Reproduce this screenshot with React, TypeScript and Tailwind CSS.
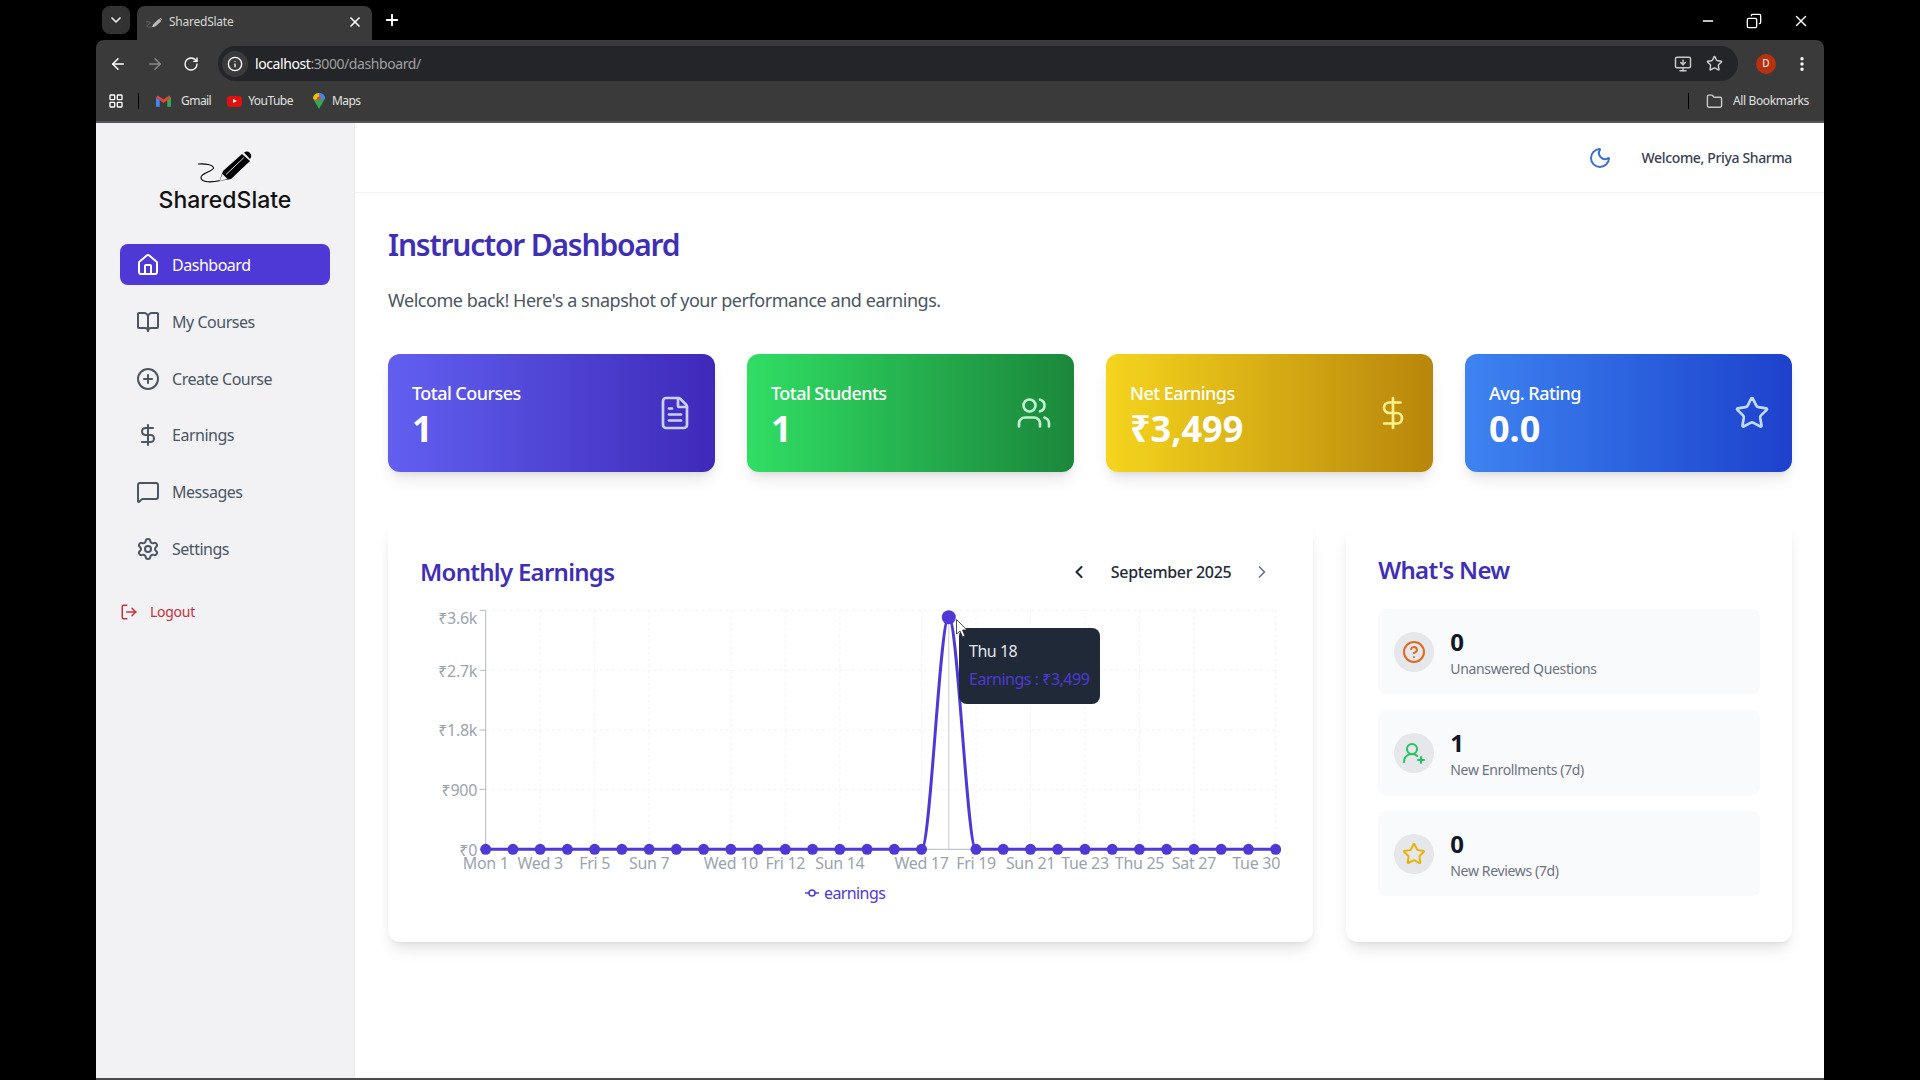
import React from 'react';
import {
  ArrowLeft, ArrowRight, BookOpen, ChevronDown, ChevronLeft, ChevronRight, CircleHelp, CirclePlus, Copy,
  DollarSign, EllipsisVertical, FileText, Folder, House, Info, LayoutGrid, LogOut, MessageSquare, Minus,
  MonitorDown, Moon, Plus, RotateCw, Settings, Star, UserRoundPlus, Users, X,
} from 'lucide-react';

const font = { fontFamily: '"Noto Sans", sans-serif' };

const PenLogo: React.FC<{ className?: string }> = ({ className }) => (
  <svg viewBox="0 0 54 36" className={className} fill="none">
    <path d="M0.500 14 C7 13.500 15 14.500 15.500 18 C15 21.500 3 23 3 27.500 C3 33 14 32.500 22.500 30.500" stroke="currentColor" strokeWidth="1.1" strokeLinecap="round" />
    <path d="M21.500 31 L25 21 L44 4 L52 11 L33 29 Z" fill="currentColor" />
    <path d="M46 2.500 C48 1 50 1 51.500 2.500 L53 4.500 C53.500 6 53 7.500 52 9 Z" fill="currentColor" />
    <path d="M21.500 31 L24.500 24 L29.500 29 Z" fill="#f2f2f5" />
    <path d="M28 24.500 L46 7.500" stroke="#f2f2f5" strokeWidth="0.9" />
  </svg>
);

const Browser: React.FC = () => (
  <div className="text-[#e8eaed] bg-black" style={font}>
    <div className="h-10 flex items-start px-[6px]">
      <div className="w-7 h-7 mt-[6px] rounded-lg bg-[#333333] flex items-center justify-center">
        <ChevronDown className="w-4 h-4" strokeWidth={2.5} />
      </div>
      <div className="w-[235px] h-[34px] mt-[6px] ml-[7px] rounded-t-lg bg-[#3a3a3a] flex items-center pl-[9px] pr-[9px]">
        <PenLogo className="w-4 h-4 text-[#b5b5b5]" />
        <span className="ml-[7px] -mt-[2px] text-xs tracking-[-0.02em] text-[#d6d6d6]">SharedSlate</span>
        <X className="w-4 h-4 ml-auto -mt-[2px] text-white" strokeWidth={2.5} />
      </div>
      <Plus className="w-[18px] h-[18px] mt-[11px] ml-[11px] text-white" strokeWidth={2.5} />
      <div className="ml-auto flex items-center mt-[12px] mr-[8px] gap-[30px] text-white">
        <Minus className="w-4 h-4" />
        <Copy className="w-4 h-4 -scale-x-100" />
        <X className="w-[18px] h-[18px]" />
      </div>
    </div>
    <div className="w-full rounded-t-lg bg-[#3a3a3a] border-b-2 border-[#555555] h-[83px]">
      <div className="h-[41px] flex items-center pt-1.5">
        <ArrowLeft className="w-[18px] h-[18px] ml-[13px] text-white" />
        <ArrowRight className="w-[18px] h-[18px] ml-[19px] text-[#8a8a8a]" />
        <RotateCw className="w-4 h-4 ml-[19px] text-white" />
        <div className="ml-[19px] w-[1520px] h-[35px] rounded-full bg-[#232528] flex items-center pl-1">
          <div className="w-[26px] h-[26px] rounded-full bg-[#3a3a3a] flex items-center justify-center">
            <Info className="w-4 h-4 text-white" />
          </div>
          <span className="ml-[7px] text-sm tracking-[-0.03em]">
            <span className="text-white">localhost</span>
            <span className="text-[#a0a0a0]">:3000/dashboard/</span>
          </span>
          <MonitorDown className="w-[18px] h-[18px] ml-auto mr-[14px] text-[#c8c8c8]" />
          <Star className="w-[17px] h-[17px] mr-[15px] text-[#d0d0d0]" />
        </div>
        <div className="ml-[18px] w-5 h-5 rounded-full bg-[#b8300f] flex items-center justify-center text-[10px] text-white">D</div>
        <EllipsisVertical className="w-[18px] h-[18px] ml-[17px] text-white" strokeWidth={2.5} />
      </div>
      <div className="h-[40px] flex items-center text-xs text-[#e0e0e0] tracking-[-0.045em]">
        <LayoutGrid className="w-4 h-4 ml-3 text-white" />
        <div className="ml-[14px] w-px h-4 bg-black" />
        <svg viewBox="0 0 16 12" className="w-[15px] h-[12px] ml-[17px]">
          <path d="M0 2 V12 H4 V5 Z" fill="#4285f4" />
          <path d="M12 5 V12 H16 V2 Z" fill="#34a853" />
          <path d="M0 2 L8 8 L16 2 L14 0 L8 4.500 L2 0 Z" fill="#ea4335" />
        </svg>
        <span className="ml-[10px]">Gmail</span>
        <div className="ml-[16px] w-[15px] h-[11px] rounded-[3px] bg-[#e01010] flex items-center justify-center">
          <div className="w-0 h-0 border-y-[2.5px] border-y-transparent border-l-[4px] border-l-white" />
        </div>
        <span className="ml-[6px]">YouTube</span>
        <svg viewBox="0 0 12 16" className="w-[12px] h-[16px] ml-[20px]">
          <path d="M6 0 C2.500 0 0 2.500 0 5.500 L6 16 L12 5.500 C12 2.500 9.500 0 6 0 Z" fill="#34a853" />
          <path d="M1 2.500 C2 1 4 0 6 0 L6 4 L2.500 7 L0 5.500 C0 4.500 0.400 3.500 1 2.500 Z" fill="#fbbc04" />
          <path d="M6 0 C9.500 0 12 2.500 12 5.500 L9 7 L6 4 Z" fill="#4285f4" />
          <circle cx="6" cy="5.500" r="2" fill="#ea4335" />
        </svg>
        <span className="ml-[7px]">Maps</span>
        <div className="ml-auto w-px h-4 bg-black" />
        <Folder className="w-[17px] h-[17px] ml-[17px] text-[#c8c8c8]" />
        <span className="ml-[10px] mr-[15px] tracking-[-0.03em]">All Bookmarks</span>
      </div>
    </div>
  </div>
);

const navItems = [
  { label: 'My Courses', Icon: BookOpen },
  { label: 'Create Course', Icon: CirclePlus },
  { label: 'Earnings', Icon: DollarSign },
  { label: 'Messages', Icon: MessageSquare },
  { label: 'Settings', Icon: Settings },
];

const Sidebar: React.FC = () => (
  <aside className="w-[259px] shrink-0 bg-[#f2f2f5] border-r border-[#e9e9ec] pl-6 pr-[24px] flex flex-col">
    <div className="flex flex-col items-center pt-[27px]">
      <PenLogo className="w-[54px] h-[36px] text-black" />
      <div className="text-[23px] leading-8 -mt-[2px] font-medium text-[#111111]" style={{ fontFamily: 'Inter, sans-serif' }}>SharedSlate</div>
    </div>
    <nav className="mt-[28px] flex flex-col gap-[15.6px] tracking-[-0.03em]">
      <div className="h-[41px] mb-[1.2px] rounded-lg bg-[#4f39d6] text-white flex items-center gap-3 px-4">
        <House className="w-6 h-6" />
        <span>Dashboard</span>
      </div>
      {navItems.map(({ label, Icon }) => (
        <div key={label} className="h-[41px] text-[#4b5563] flex items-center gap-3 px-4">
          <Icon className="w-6 h-6" />
          <span>{label}</span>
        </div>
      ))}
    </nav>
    <div className="mt-[33px] flex items-center text-sm text-[#c9303f] tracking-[-0.02em]">
      <LogOut className="w-[18px] h-[18px] scale-x-[-1] rotate-180" />
      <span className="ml-3">Logout</span>
    </div>
  </aside>
);

const statCards = [
  { label: 'Total Courses', value: '1', Icon: FileText, bg: 'from-[#625ff0] to-[#3f28ba]', iconColor: 'text-[#c7d2fe]' },
  { label: 'Total Students', value: '1', Icon: Users, bg: 'from-[#30de64] to-[#1b873b]', iconColor: 'text-[#bbf7d0]' },
  { label: 'Net Earnings', value: '₹3,499', Icon: DollarSign, bg: 'from-[#f5d51e] to-[#b8860b]', iconColor: 'text-[#fef08a]' },
  { label: 'Avg. Rating', value: '0.0', Icon: Star, bg: 'from-[#3f83f1] to-[#1f40cc]', iconColor: 'text-[#bfdbfe]' },
];

const X0 = 65.7;
const STEP = 27.24;
const TOP = 10.3;
const BASE = 249.3;
const PEAK = 17;
const PEAK_Y = 17.2;
const px = (i: number) => X0 + i * STEP;

const yTicks = [
  { label: '₹3.6k', y: TOP, textY: 18 },
  { label: '₹2.7k', y: 70.3, textY: 71 },
  { label: '₹1.8k', y: 130, textY: 130 },
  { label: '₹900', y: 189.3, textY: 190 },
  { label: '₹0', y: BASE, textY: 249.5 },
];

const xTicks: [number, string][] = [
  [0, 'Mon 1'], [2, 'Wed 3'], [4, 'Fri 5'], [6, 'Sun 7'], [9, 'Wed 10'], [11, 'Fri 12'], [13, 'Sun 14'],
  [16, 'Wed 17'], [18, 'Fri 19'], [20, 'Sun 21'], [22, 'Tue 23'], [24, 'Thu 25'], [26, 'Sat 27'],
];

const linePath = [
  `M${px(0)} ${BASE}`,
  `L${px(PEAK - 1)} ${BASE}`,
  `C${px(PEAK - 1) + 9.08} ${BASE} ${px(PEAK) - 9.08} ${PEAK_Y} ${px(PEAK)} ${PEAK_Y}`,
  `C${px(PEAK) + 9.08} ${PEAK_Y} ${px(PEAK + 1) - 9.08} ${BASE} ${px(PEAK + 1)} ${BASE}`,
  `L${px(29)} ${BASE}`,
].join(' ');

const EarningsChart: React.FC = () => (
  <div className="relative mt-[10px] h-[310px]">
    <svg width="861" height="310" className="block" fontSize="16" style={font}>
      <g stroke="#f1f2f4" strokeDasharray="3 3">
        {yTicks.slice(0, 4).map((t) => <line key={t.label} x1={X0} x2={px(29)} y1={t.y} y2={t.y} />)}
        {xTicks.slice(1).map(([i]) => <line key={i} x1={px(i)} x2={px(i)} y1={TOP} y2={BASE} />)}
        <line x1={px(29)} x2={px(29)} y1={TOP} y2={BASE} />
      </g>
      <g stroke="#b4b7c2">
        <line x1={X0} x2={X0} y1={TOP} y2={BASE} />
        <line x1={X0} x2={px(29)} y1={BASE} y2={BASE} />
        {yTicks.map((t) => <line key={t.label} x1={X0 - 6} x2={X0} y1={t.y} y2={t.y} />)}
      </g>
      <g fill="#9ca3af" letterSpacing="-0.3">
        {yTicks.map((t) => <text key={t.label} x={57} y={t.textY} textAnchor="end" dominantBaseline="central">{t.label}</text>)}
        {xTicks.map(([i, label]) => <text key={i} x={px(i)} y={263} textAnchor="middle" dominantBaseline="central">{label}</text>)}
        <text x={860} y={263} textAnchor="end" dominantBaseline="central">Tue 30</text>
      </g>
      <line x1={px(PEAK)} x2={px(PEAK)} y1={TOP} y2={BASE} stroke="#cccccc" />
      <path d={linePath} fill="none" stroke="#4f39d6" strokeWidth="3" />
      {Array.from({ length: 30 }, (_, i) => i).filter((i) => i !== PEAK).map((i) => (
        <circle key={i} cx={px(i)} cy={BASE} r="5.5" fill="#4f39d6" />
      ))}
      <circle cx={px(PEAK)} cy={PEAK_Y} r="7" fill="#4f39d6" />
      <g stroke="#4f39d6" fill="none" strokeWidth="1.5">
        <line x1={385} x2={399} y1={293} y2={293} />
        <circle cx={392} cy={293} r="3" fill="#ffffff" />
      </g>
      <text x={404} y={293} fill="#4f39d6" dominantBaseline="central" letterSpacing="-0.6">earnings</text>
    </svg>
    <div className="absolute left-[539px] top-[28px] w-[141px] h-[76px] rounded-lg bg-[#1f2937] pl-[10px] pt-[9px] text-base leading-7 tracking-[-0.03em]">
      <div className="text-[#e5e7eb]">Thu 18</div>
      <div className="text-[#4f39d6] whitespace-nowrap">Earnings : ₹3,499</div>
    </div>
    <svg viewBox="0 0 12 19" className="absolute left-[536px] top-[19px] w-3 h-[19px]">
      <path d="M0.500 0.500 L0.500 15 L4 12 L6.500 18 L9 17 L6.500 11 L11 11 Z" fill="#ffffff" stroke="#222222" strokeWidth="0.8" />
    </svg>
  </div>
);

const whatsNew = [
  { value: '0', label: 'Unanswered Questions', Icon: CircleHelp, color: 'text-[#dd6b20]' },
  { value: '1', label: 'New Enrollments (7d)', Icon: UserRoundPlus, color: 'text-[#22c55e]' },
  { value: '0', label: 'New Reviews (7d)', Icon: Star, color: 'text-[#eab308]' },
];

export default function App() {
  return (
    <div className="h-screen w-screen overflow-hidden bg-black flex flex-col px-[96px]" style={font}>
      <Browser />
      <div className="flex-1 min-h-0 flex bg-white">
        <Sidebar />
        <div className="flex-1 min-w-0 flex flex-col">
          <header className="h-[70px] shrink-0 border-b border-[#f3f4f6] flex items-center justify-end px-8">
            <Moon className="w-6 h-6 text-[#3b6fd4]" />
            <span className="ml-[30px] text-sm font-medium text-[#374151] tracking-[-0.025em]">Welcome, Priya Sharma</span>
          </header>
          <main className="pl-[33px] pr-8 pt-[32px]">
            <h1 className="text-[30px] leading-10 font-semibold text-[#3f2fb5] tracking-[-0.04em]">Instructor Dashboard</h1>
            <p className="mt-[21px] text-lg leading-7 text-[#4b5563] tracking-[-0.025em]">Welcome back! Here's a snapshot of your performance and earnings.</p>
            <div className="mt-[40px] grid grid-cols-4 gap-8">
              {statCards.map(({ label, value, Icon, bg, iconColor }) => (
                <div key={label} className={`h-[118px] rounded-xl bg-gradient-to-r ${bg} shadow-lg pl-6 pr-[22px] pt-[2px] flex items-center justify-between`}>
                  <div className="text-white">
                    <div className="text-lg font-medium leading-7 tracking-[-0.03em]">{label}</div>
                    <div className="mt-0.5 text-4xl leading-10 font-bold">{value}</div>
                  </div>
                  <Icon className={`w-9 h-9 -mt-[2px] ${iconColor}`} strokeWidth={1.8} />
                </div>
              ))}
            </div>
            <div className="mt-[50px] grid grid-cols-3 gap-8">
              <section className="col-span-2 rounded-xl bg-white shadow-lg p-8 h-[420px]">
                <div className="h-9 flex items-center">
                  <h2 className="text-2xl font-semibold text-[#3f2fb5] tracking-[-0.03em]">Monthly Earnings</h2>
                  <ChevronLeft className="w-5 h-5 ml-auto text-[#1f2937]" strokeWidth={2.5} />
                  <span className="ml-[22px] mr-[21px] font-medium text-[#1f2937] tracking-[-0.02em]">September 2025</span>
                  <ChevronRight className="w-5 h-5 mr-[9px] text-[#6b7280]" strokeWidth={2} />
                </div>
                <EarningsChart />
              </section>
              <section className="ml-px rounded-xl bg-white shadow-lg p-8 h-[420px]">
                <h2 className="text-2xl leading-8 font-semibold text-[#3f2fb5] tracking-[-0.03em]">What's New</h2>
                <div className="mt-[23px] flex flex-col gap-4">
                  {whatsNew.map(({ value, label, Icon, color }) => (
                    <div key={label} className="h-[85px] rounded-lg bg-[#f9fafb] px-4 flex items-center gap-4">
                      <div className="w-10 h-10 rounded-full bg-[#e5e7eb] flex items-center justify-center">
                        <Icon className={`w-6 h-6 ${color}`} />
                      </div>
                      <div className="pt-[2px]">
                        <div className="text-2xl leading-8 font-bold text-[#111827]">{value}</div>
                        <div className="text-sm leading-5 mt-px text-[#6b7280] tracking-[-0.025em]">{label}</div>
                      </div>
                    </div>
                  ))}
                </div>
              </section>
            </div>
          </main>
        </div>
      </div>
      <div className="h-[2px] shrink-0 bg-[#4a4a4a]" />
    </div>
  );
}
